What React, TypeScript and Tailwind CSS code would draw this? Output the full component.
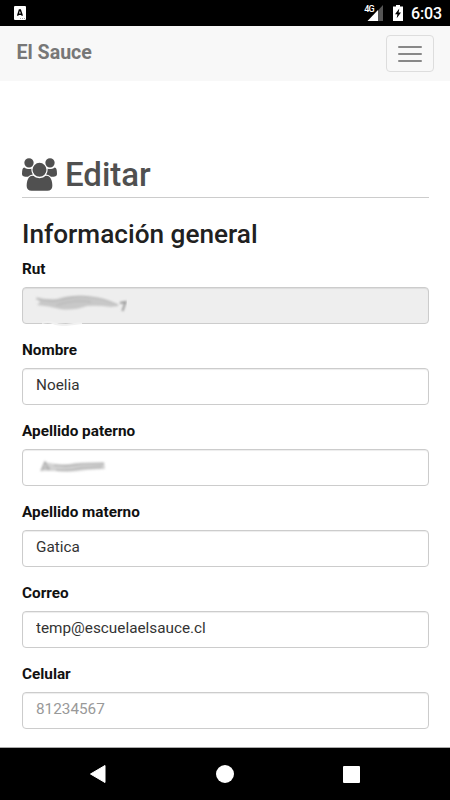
import { useState } from 'react';

const FIELDS = [
  { name: 'rut', label: 'Rut', value: '', placeholder: '', disabled: true, smudge: 'rut' },
  { name: 'nombre', label: 'Nombre', value: 'Noelia', placeholder: '' },
  { name: 'paterno', label: 'Apellido paterno', value: '', placeholder: '', smudge: 'paterno' },
  { name: 'materno', label: 'Apellido materno', value: 'Gatica', placeholder: '' },
  { name: 'correo', label: 'Correo', value: 'temp@escuelaelsauce.cl', placeholder: '' },
  { name: 'celular', label: 'Celular', value: '', placeholder: '81234567' },
];

function StatusBar() {
  return (
    <div className="h-[26px] bg-black text-white flex items-center justify-between pl-[14px] pr-[9px]">
      <svg width="12" height="14" viewBox="0 0 12 14">
        <rect width="12" height="14" rx="1" fill="#fff" />
        <path d="M3.6 9.8L5.4 4H6.4L8.3 9.8M4.4 8.2H7.5" fill="none" stroke="#000" strokeWidth="1.4" />
        <path d="M6 12.5H11" stroke="#aaa" strokeWidth="1" strokeDasharray="1 1" />
      </svg>
      <div className="flex items-center">
        <span className="text-[9px] font-medium leading-none -mt-[8px] -mr-[7px] tracking-[-0.8px] z-10">4G</span>
        <svg width="17" height="16" viewBox="0 0 17 16">
          <path d="M11 5.5L16 0V16H11Z" fill="#555" />
          <path d="M0.5 16L11 5V16Z" fill="#fff" />
        </svg>
        <svg className="ml-[9px]" width="10" height="16" viewBox="0 0 10 16">
          <path d="M3 0H7V1.5H10V16H0V1.5H3Z" fill="#fff" />
          <path d="M6.3 3.5L2 9.2H4.4L3.7 13.2L8 7.5H5.6Z" fill="#000" />
        </svg>
        <span className="ml-[8px] mt-[2px] text-[16px] leading-[26px] font-medium -mr-px tracking-[-0.1px]">6:03</span>
      </div>
    </div>
  );
}

function UsersIcon() {
  return (
    <svg width="35" height="33" viewBox="0 0 1920 1792" fill="currentColor">
      <path d="M593 896q-162 5-265 128h-134q-82 0-138-40.5t-56-118.5q0-353 124-353 6 0 43.5 21t97.5 42.5 119 21.5q67 0 133-23-5 37-5 66 0 139 81 256zm1071 637q0 120-73 189.5t-194 69.5h-874q-121 0-194-69.5t-73-189.5q0-53 3.5-103.5t14-109 26.5-108.5 43-97.5 62-81 85.5-53.5 111.5-20q10 0 43 21.5t73 48 107 48 135 21.5 135-21.5 107-48 73-48 43-21.5q61 0 111.5 20t85.5 53.5 62 81 43 97.5 26.5 108.5 14 109 3.5 103.5zm-1024-1277q0 106-75 181t-181 75-181-75-75-181 75-181 181-75 181 75 75 181zm704 384q0 159-112.5 271.5t-271.5 112.5-271.5-112.5-112.5-271.5 112.5-271.5 271.5-112.5 271.5 112.5 112.5 271.5zm576 225q0 78-56 118.5t-138 40.5h-134q-103-123-265-128 81-117 81-256 0-29-5-66 66 23 133 23 59 0 119-21.5t97.5-42.5 43.5-21q124 0 124 353zm-128-609q0 106-75 181t-181 75-181-75-75-181 75-181 181-75 181 75 75 181z" />
    </svg>
  );
}

// Smeared strokes hiding the private values
function Smudge({ kind }: { kind: string }) {
  return (
    <svg className="absolute left-0 top-0 pointer-events-none" width="130" height="40" viewBox="0 0 130 40">
      <defs>
        <filter id={`blur-${kind}`} x="-20%" y="-50%" width="140%" height="200%">
          <feGaussianBlur stdDeviation="1" />
        </filter>
      </defs>
      {kind === 'rut' ? (
        <>
          <g filter={`url(#blur-${kind})`}>
            <path d="M14 10Q23 13 35 12Q47 8 61 9Q78 9 91 16L97 19L89 20Q76 18 65 19Q51 24 38 22Q27 19 15 18L18 15Z" fill="#c8c8c8" />
            <path d="M14 12Q30 15 39 13Q56 8 67 10Q82 11 96 18M35 18Q54 12 69 15" fill="none" stroke="#b4b4b4" strokeWidth="1.2" />
          </g>
          <path d="M98 16L103.5 15L100.5 24" fill="none" stroke="#999" strokeWidth="2" filter={`url(#blur-${kind})`} />
          <path d="M20 36Q26 34 31 36T44 38L60 36" fill="none" stroke="#f1f1f1" strokeWidth="2" />
        </>
      ) : (
        <g filter={`url(#blur-${kind})`}>
          <path d="M22 13L28 14Q41 17 53 14L82 13L83 20L65 21Q48 24 34 22L19 22Z" fill="#d3d3d3" />
          <path d="M19 22L23 13L27 21M21 19H28M32 16Q47 18 60 15L82 15M34 21Q48 22 59 19L80 18" fill="none" stroke="#a3a3a3" strokeWidth="1.2" />
        </g>
      )}
    </svg>
  );
}

export default function App() {
  const [values, setValues] = useState<Record<string, string>>(
    Object.fromEntries(FIELDS.map((f) => [f.name, f.value])),
  );

  return (
    <div className="w-[450px] h-[800px] bg-white flex flex-col overflow-hidden font-['Roboto',sans-serif]">
      <StatusBar />

      <nav className="h-[55px] bg-[#f8f8f8] flex items-center justify-between pl-[16.5px] pr-4">
        <span className="text-[19.6px] leading-[28px] -mt-px font-bold text-[#777]">El Sauce</span>
        <button className="w-[48px] h-[37px] border border-[#ddd] rounded-[4px] flex flex-col items-center justify-center gap-[5px]">
          <span className="block w-6 h-[2px] rounded-[1px] bg-[#888]" />
          <span className="block w-6 h-[2px] rounded-[1px] bg-[#888]" />
          <span className="block w-6 h-[2px] rounded-[1px] bg-[#888]" />
        </button>
      </nav>

      <main className="flex-1 min-h-0 px-[22px] pt-[73px] w-[451px]">
        <h1 className="h-[44px] border-b border-[#ccc] flex items-start gap-2 pt-1 text-[#505050]">
          <UsersIcon />
          <span className="text-[33px] leading-[33px] font-medium">Editar</span>
        </h1>
        <h2 className="mt-[20px] text-[26.2px] leading-[32px] font-medium text-[#212121]">Información general</h2>

        <form className="mt-[9px]">
          {FIELDS.map((f) => (
            <div key={f.name} className="h-[81px]">
              <label htmlFor={f.name} className="block h-[28px] text-[15.3px] leading-[20px] font-bold text-[#111]">{f.label}</label>
              <div className="relative">
                <input
                  id={f.name}
                  className="block w-full h-[37px] px-[13px] pb-[3px] text-[15.3px] text-[#333] placeholder:text-[#999] bg-white disabled:bg-[#eee] border border-[#ccc] rounded-[4px] shadow-[inset_0_1px_1px_rgba(0,0,0,0.075)]"
                  value={values[f.name]}
                  placeholder={f.placeholder}
                  disabled={f.disabled}
                  onChange={(e) => setValues({ ...values, [f.name]: e.target.value })}
                />
                {f.smudge && <Smudge kind={f.smudge} />}
              </div>
            </div>
          ))}
        </form>
      </main>

      {/* Android navigation */}
      <footer className="h-[53px] shrink-0 bg-black border-t border-[#aaa] flex items-center justify-between pl-[90px] pr-[90px]">
        <svg width="16" height="18" viewBox="0 0 16 18"><path d="M0.5 9L15 0.5V17.5Z" fill="#fff" stroke="#fff" strokeLinejoin="round" /></svg>
        <span className="block w-[18px] h-[18px] rounded-full bg-white" />
        <span className="block w-[17px] h-[17px] rounded-[1px] bg-white" />
      </footer>
    </div>
  );
}
